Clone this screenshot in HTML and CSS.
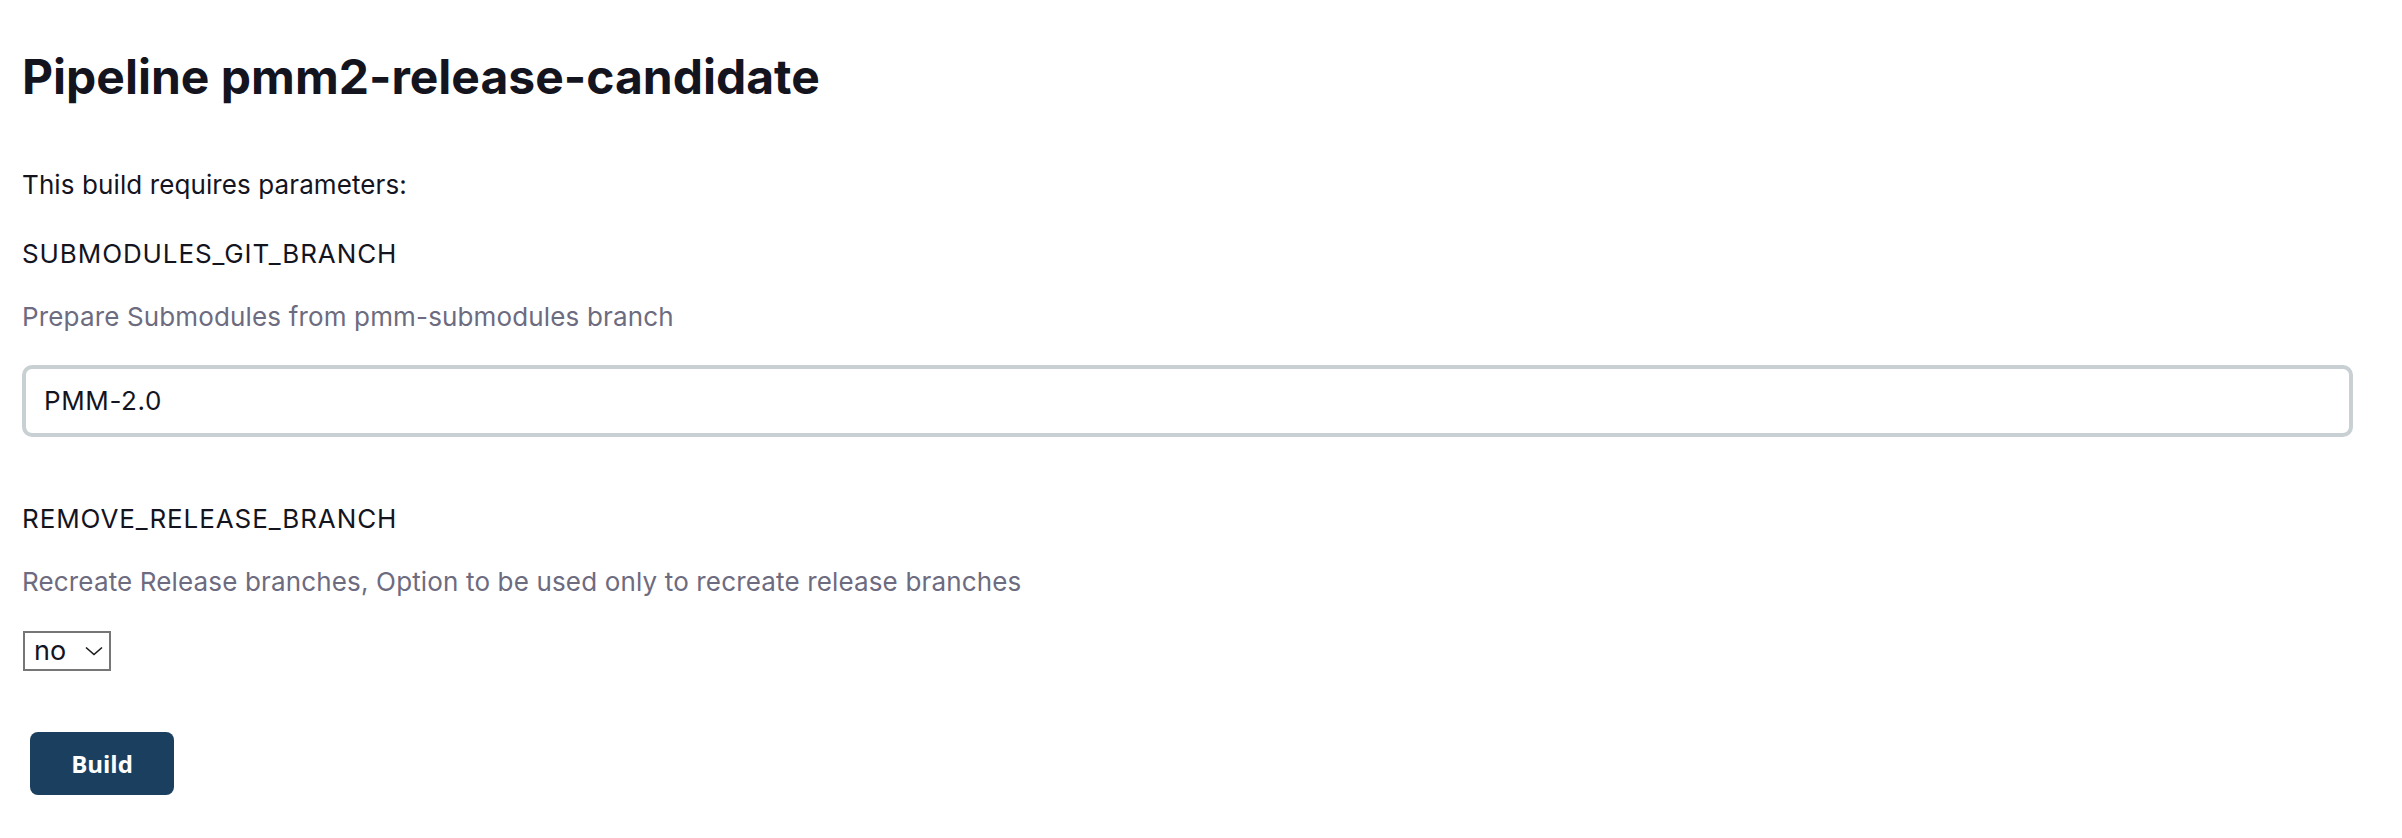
FILE: index.html
```html
<!DOCTYPE html>
<html lang="en">
<head>
<meta charset="utf-8">
<title>Pipeline pmm2-release-candidate</title>
<link rel="stylesheet" href="styles.css">
</head>
<body>
<main class="page">
  <h1 class="title">Pipeline pmm2-release-candidate</h1>
  <p class="intro">This build requires parameters:</p>
  <form class="params">
    <div class="param">
      <div class="param-name">SUBMODULES_GIT_BRANCH</div>
      <div class="param-desc">Prepare Submodules from pmm-submodules branch</div>
      <input class="text-input" type="text" value="PMM-2.0">
    </div>
    <div class="param param-second">
      <div class="param-name">REMOVE_RELEASE_BRANCH</div>
      <div class="param-desc">Recreate Release branches, Option to be used only to recreate release branches</div>
      <span class="select-wrap">
        <select class="select">
          <option>no</option>
          <option>yes</option>
        </select>
        <svg class="select-chevron" width="18" height="10" viewBox="0 0 18 10" aria-hidden="true"><path d="M1 1.5 L9 8.5 L17 1.5" fill="none" stroke="#1a1a1a" stroke-width="1.6"/></svg>
      </span>
    </div>
    <div class="actions">
      <button class="build-btn" type="button">Build</button>
    </div>
  </form>
</main>
</body>
</html>
```
FILE: styles.css
```css
html, body {
  margin: 0;
  padding: 0;
  background: #ffffff;
}

body {
  font-family: Inter, "Liberation Sans", sans-serif;
  color: #14141f;
  font-size: 26px;
  line-height: 1.5;
}

.page {
  padding: 48px 49px 40px 22px;
}

.title {
  margin: 0;
  font-size: 48px;
  line-height: 58px;
  font-weight: 700;
  letter-spacing: 0;
  color: #14141f;
}

.intro {
  margin: 60px 0 0;
  line-height: 37.5px;
  letter-spacing: 0.1px;
}

.params {
  margin: 0;
}

.param {
  display: flex;
  flex-direction: column;
  align-items: flex-start;
}

.param-name {
  margin-top: 31px;
  line-height: 37.5px;
  letter-spacing: 0.9px;
}

.param-second .param-name {
  margin-top: 63px;
}

.param-desc {
  margin-top: 26px;
  line-height: 37.5px;
  letter-spacing: 0.15px;
  color: #6d6b80;
}

.text-input {
  box-sizing: border-box;
  margin-top: 29px;
  width: 100%;
  height: 72px;
  padding: 0 18px;
  border: 4px solid #c9d0d4;
  border-radius: 10px;
  font-family: inherit;
  font-size: 26px;
  letter-spacing: 0.6px;
  color: #14141f;
  background: #fff;
  outline: none;
}

.select-wrap {
  position: relative;
  display: inline-block;
  margin-top: 30px;
  margin-left: 1px;
}

.select {
  -webkit-appearance: none;
  appearance: none;
  box-sizing: border-box;
  width: 88px;
  height: 40px;
  padding: 0 30px 0 9px;
  border: 2px solid #767676;
  border-radius: 0;
  background: #fff;
  font-family: inherit;
  font-size: 27px;
  color: #14141f;
}

.select-chevron {
  position: absolute;
  right: 8px;
  top: 15px;
  pointer-events: none;
}

.actions {
  margin-top: 61px;
  padding-left: 8px;
}

.build-btn {
  width: 144px;
  height: 63px;
  border: none;
  border-radius: 8px;
  background: #1b3f5f;
  color: #ffffff;
  font-family: "Open Sans", Inter, sans-serif;
  font-size: 24px;
  font-weight: 700;
  cursor: pointer;
}
```
